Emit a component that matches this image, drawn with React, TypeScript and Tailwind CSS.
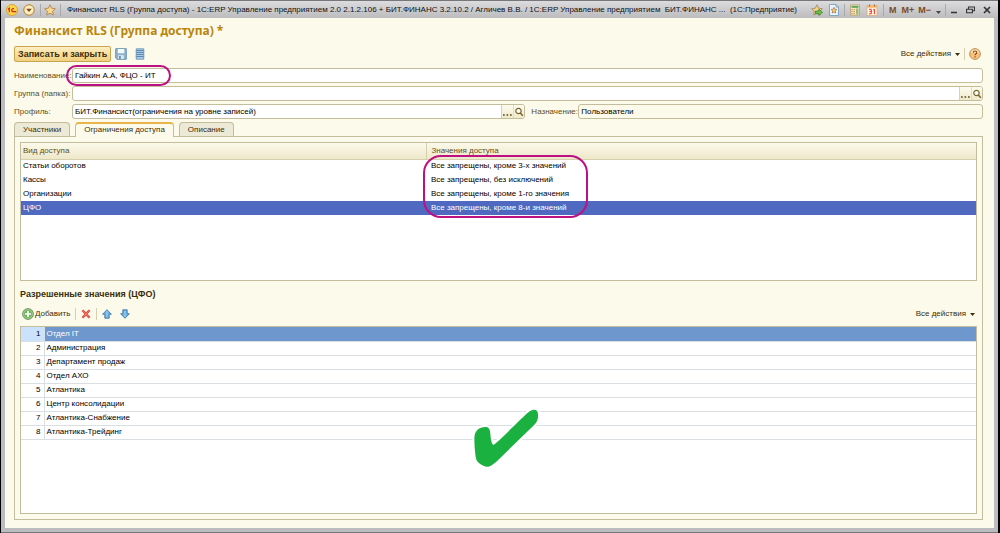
import type { ReactNode } from "react";
import clsx from "clsx";

const accessKinds = [
  { kind: "Статьи оборотов", value: "Все запрещены, кроме 3-х значений" },
  { kind: "Кассы", value: "Все запрещены, без исключений" },
  { kind: "Организации", value: "Все запрещены, кроме 1-го значения" },
  { kind: "ЦФО", value: "Все запрещены, кроме 8-и значений", selected: true },
];

const allowedValues = [
  "Отдел IT",
  "Администрация",
  "Департамент продаж",
  "Отдел АХО",
  "Атлантика",
  "Центр консолидации",
  "Атлантика-Снабжение",
  "Атлантика-Трейдинг",
];

const STAR = "M6 .8l1.6 3.4 3.7.5-2.7 2.6.7 3.7L6 9.200l-3.300 1.800.7-3.700L.7 4.700l3.700-.5z";

const LogoIcon = () => (
  <svg viewBox="0 0 12 12" className="size-3">
    <circle cx="6" cy="6" r="5.500" fill="#fbd64b" stroke="#dca63a" />
    <path d="M2 5.200l1.300-1v4M8 4.900a1.500 1.500 0 1 0-.8 2.800h3" fill="none" stroke="#d8231c" strokeWidth="1.200" />
  </svg>
);

const MenuIcon = () => (
  <svg viewBox="0 0 12 12" className="size-3">
    <circle cx="6" cy="6" r="5.300" fill="#f9d995" stroke="#b98a4b" />
    <circle cx="6" cy="6" r="4" fill="#fdeec5" />
    <path d="M3.200 4.800h5.600L6 8z" fill="#7a4a1c" />
  </svg>
);

const StarIcon = () => (
  <svg viewBox="0 0 12 12" className="size-3">
    <path d={STAR} fill="#fbd98a" stroke="#a87c46" strokeWidth=".8" />
  </svg>
);

const StarAddIcon = () => (
  <svg viewBox="0 0 12 12" className="size-3">
    <path d={STAR} fill="#f8d48d" stroke="#a08558" strokeWidth=".8" />
    <path d="M4.500 7h3.300V5.200L11.600 8.300 7.800 11.400V9.700H4.500z" fill="#6cc04a" stroke="#2f7d27" strokeWidth=".7" />
  </svg>
);

const StarPageIcon = () => (
  <svg viewBox="0 0 12 12" className="size-3">
    <path d="M1.500.5h6.500l2.500 2.500v8.500h-9z" fill="#e9f3fb" stroke="#6f95b8" strokeWidth=".8" />
    <path d="M8 .5v2.500h2.500" fill="none" stroke="#6f95b8" strokeWidth=".8" />
    <path d="M6 3.300l.9 1.900 2 .3-1.500 1.400.4 2.100L6 8l-1.800 1 .4-2.100-1.500-1.400 2-.3z" fill="#fbc66a" stroke="#8f6a35" strokeWidth=".6" />
  </svg>
);

const CalculatorIcon = () => (
  <svg viewBox="0 0 12 12" className="size-3">
    <path d="M1.500.8h9v10.400h-9z" fill="#f8e7c5" stroke="#b59a6a" strokeWidth=".7" />
    <path d="M2.500 1.800h7v2h-7z" fill="#57a65a" />
    <path d="M3 5v5.500M5.200 5v5.500" stroke="#c58b4c" strokeWidth="1.200" strokeDasharray="1.200 .8" />
    <path d="M7 4.500h2.500v6H7z" fill="#9bbd78" />
  </svg>
);

const CalendarIcon = () => (
  <svg viewBox="0 0 12 12" className="size-3">
    <path d="M1 1.500h10v10H1z" fill="#fff1df" stroke="#d9a877" strokeWidth=".7" />
    <path d="M1 1.500h10v2.200H1z" fill="#f6b36b" />
    <path d="M3.500.5v2M8.500.5v2" stroke="#9b6a3d" />
    <path d="M3 5.300h2.300v4.500H3M3.500 7.500h1.800M7.200 6l1.200-.8v5" fill="none" stroke="#e5392b" strokeWidth="1" />
  </svg>
);

const SaveIcon = () => (
  <svg viewBox="0 0 12 12" className="size-3">
    <path d="M.7.7h10.600v10.600H2L.7 10z" fill="#8fb3cf" stroke="#6d95b1" />
    <path d="M2.800 1h6.500v4.200H2.800z" fill="#f4f9fc" />
    <path d="M3.200 7.200h5.600V11H3.200z" fill="#dce8f0" />
    <path d="M4.200 8h1.500v3H4.200z" fill="#54809f" />
  </svg>
);

const ListIcon = () => (
  <svg viewBox="0 0 12 12" className="size-3">
    <path d="M2.200.8h7.600v10.400H2.200z" fill="#a9cbe8" stroke="#5f8cb4" strokeWidth=".8" />
    <path d="M2.500 2.500h7M2.500 4.500h7M2.500 6.500h7M2.500 8.500h7" stroke="#4674a0" strokeWidth=".8" />
  </svg>
);

const SearchIcon = () => (
  <svg viewBox="0 0 10 10" className="size-[10px]">
    <circle cx="4.500" cy="4" r="2.700" fill="#fffef5" stroke="#776531" strokeWidth="1.200" />
    <path d="M6.300 6l2.500 2.700" stroke="#776531" strokeWidth="1.600" />
  </svg>
);

const HelpIcon = () => (
  <svg viewBox="0 0 12 12" className="size-3">
    <circle cx="6" cy="6" r="5.400" fill="#f9c079" stroke="#b98a55" strokeWidth=".9" />
    <path d="M1.800 5a4.300 4.300 0 0 1 8.400 0z" fill="#fde3bb" />
    <path d="M4.300 4.700c0-2.300 3.500-2.200 3.500-.2 0 1.300-1.700 1.300-1.700 2.700M6.100 8.300v1.200" fill="none" stroke="#8a4a1d" strokeWidth="1.200" />
  </svg>
);

const AddIcon = () => (
  <svg viewBox="0 0 12 12" className="size-3">
    <circle cx="6" cy="6" r="5.400" fill="#6fb45a" stroke="#6e8a62" strokeWidth=".9" />
    <circle cx="6" cy="6" r="4.400" fill="none" stroke="#b9dca9" strokeWidth=".7" />
    <path d="M6 3v6M3 6h6" stroke="#fff" strokeWidth="1.700" />
  </svg>
);

const DeleteIcon = () => (
  <svg viewBox="0 0 10 10" className="size-[10px]">
    <path d="M1.500 1.200l7 7.600M8.500 1.200l-7 7.600" stroke="#d9483b" strokeWidth="2.400" />
    <path d="M1.800 1.500l6.400 7M8.200 1.500l-6.400 7" stroke="#f2887c" strokeWidth=".8" />
  </svg>
);

const ArrowIcon = ({ down }: { down?: boolean }) => (
  <svg viewBox="0 0 10 10" className={clsx("size-[10px]", down && "rotate-180")}>
    <path d="M5 .7L9.400 5.300H7.200v3.900H2.800V5.300H.6z" fill="#68b1e2" stroke="#3c6f9c" strokeWidth=".8" strokeLinejoin="round" />
    <path d="M5 2v6" stroke="#a7d6f4" />
  </svg>
);

const Caret = ({ className }: { className?: string }) => (
  <svg viewBox="0 0 5 3" className={clsx("h-[3px] w-[5px]", className)}>
    <path d="M0 0h5L2.500 3z" fill="currentColor" />
  </svg>
);

const Separator = ({ className }: { className?: string }) => (
  <span className={clsx("w-px shrink-0", className)} />
);

const TitleBar = () => (
  <header className="flex h-[17px] shrink-0 items-center bg-linear-to-b from-[#dcdcde] to-[#bcbcbf] pl-[5px] pr-[7px] text-[#111]">
    <button aria-label="Главное меню"><LogoIcon /></button>
    <button aria-label="Меню" className="ml-[5px]"><MenuIcon /></button>
    <Separator className="ml-[5px] h-3 bg-[#a9a9ac]" />
    <button aria-label="Избранное" className="ml-[3px]"><StarIcon /></button>
    <Separator className="ml-1 h-3 bg-[#a9a9ac]" />
    <h1 className="ml-[6px] min-w-0 flex-1 truncate whitespace-pre">
      Финансист RLS (Группа доступа) - 1С:ERP Управление предприятием 2.0 2.1.2.106 + БИТ.ФИНАНС 3.2.10.2 / Агличев В.В. / 1С:ERP Управление предприятием  БИТ.ФИНАНС ...  (1С:Предприятие)
    </h1>
    <div className="flex shrink-0 items-center text-[9px] font-bold text-[#7b4a26]">
      <button aria-label="Добавить в избранное"><StarAddIcon /></button>
      <button aria-label="Открыть избранное" className="ml-[5px]"><StarPageIcon /></button>
      <Separator className="ml-1 h-3 bg-[#a9a9ac]" />
      <button aria-label="Калькулятор" className="ml-1"><CalculatorIcon /></button>
      <button aria-label="Календарь" className="ml-[5px]"><CalendarIcon /></button>
      <Separator className="ml-[5px] h-3 bg-[#a9a9ac]" />
      <button className="ml-[5px]">M</button>
      <button className="ml-[5px]">M+</button>
      <button className="ml-1">M−</button>
      <button aria-label="Ещё" className="ml-[5px] pt-[5px] text-[#444]"><Caret /></button>
      <Separator className="ml-1 h-3 bg-[#a9a9ac]" />
    </div>
    <div className="ml-1 flex items-center gap-2 text-[#333]">
      <button aria-label="Свернуть">
        <svg viewBox="0 0 8 8" className="size-2"><path d="M1 6.500h6" stroke="currentColor" strokeWidth="1.500" /></svg>
      </button>
      <button aria-label="Восстановить">
        <svg viewBox="0 0 9 8" className="h-2 w-[9px]"><path d="M.6 3.200h5.800v3.600H.6zM2.500 3V1h6v3.800H6.600" fill="none" stroke="currentColor" strokeWidth="1.100" /></svg>
      </button>
      <button aria-label="Закрыть">
        <svg viewBox="0 0 8 8" className="size-2"><path d="M1 1l6 6M7 1L1 7" stroke="currentColor" strokeWidth="1.700" /></svg>
      </button>
    </div>
  </header>
);

const PickerButtons = () => (
  <div className="flex shrink-0 border-l border-[#d8d2b4] bg-linear-to-b from-[#fdfbee] to-[#efe9cb]">
    <button aria-label="Выбрать" className="flex w-[11px] items-end justify-center pb-[2px]">
      <svg viewBox="0 0 9 2" className="h-[2px] w-[9px]">
        <path d="M0 .2h1.700v1.600H0zM3.500.2h1.700v1.600H3.500zM7 .2h1.700v1.600H7z" fill="#5e4c1d" />
      </svg>
    </button>
    <button aria-label="Открыть" className="flex w-[11px] items-center justify-center border-l border-[#e3ddc0]">
      <SearchIcon />
    </button>
  </div>
);

type FieldProps = {
  id: string;
  value: string;
  readOnly?: boolean;
  picker?: boolean;
  className?: string;
};

const Field = ({ id, value, readOnly, picker, className }: FieldProps) => (
  <div
    className={clsx(
      "flex h-[15px] min-w-0 overflow-hidden rounded-[3px] border border-[#c3bd9b]",
      readOnly ? "bg-[#fcfaeb]" : "bg-white",
      className,
    )}
  >
    <input
      id={id}
      defaultValue={value}
      readOnly={readOnly}
      className="min-w-0 flex-1 bg-transparent px-[2px] text-black outline-none"
    />
    {picker && <PickerButtons />}
  </div>
);

const AllActions = () => (
  <button className="flex items-center gap-1 text-[#3d2e08]">
    Все действия
    <Caret />
  </button>
);

const Tab = ({ active, children }: { active?: boolean; children: ReactNode }) => (
  <button
    role="tab"
    aria-selected={!!active}
    className={clsx(
      "rounded-t-[4px] border border-b-0 border-[#c3bd9b] px-2 text-[#3d2e08]",
      active ? "relative -mb-px h-[15px] border-t-2 border-t-[#e9b44c] bg-[#fcfaeb] pb-px" : "h-[14px] bg-[#ece9d6]",
    )}
  >
    {children}
  </button>
);

const AccessTable = () => (
  <div className="relative min-h-[139px] border border-[#c3bd9b] bg-white">
    <table className="w-full table-fixed border-collapse text-left">
      <colgroup>
        <col className="w-[42.500%]" />
        <col />
      </colgroup>
      <thead>
        <tr className="h-4 bg-linear-to-b from-[#fbf9ea] to-[#eee8ca] text-[#5f4e1a]">
          <th className="border-b border-r border-[#d5cfae] px-[2px] py-0 font-normal">Вид доступа</th>
          <th className="border-b border-[#d5cfae] px-1 py-0 font-normal">Значения доступа</th>
        </tr>
      </thead>
      <tbody>
        {accessKinds.map(({ kind, value, selected }) => (
          <tr key={kind} className={clsx("h-[14px]", selected ? "bg-[#4f69c0] text-white" : "text-black")}>
            <td className="px-[2px] py-0">{kind}</td>
            <td className="px-1 py-0">{value}</td>
          </tr>
        ))}
      </tbody>
    </table>
    <div className="pointer-events-none absolute left-[42.100%] top-[12px] h-[63px] w-[165px] rounded-[18px] border-2 border-[#bd1183]" />
  </div>
);

const CheckMark = () => (
  <svg viewBox="90 45 215 200" className="pointer-events-none absolute left-[47%] top-[78px] h-[67px] w-[72px]">
    <path
      d="M103 145C103 122 118 111 136 111C147 111 150 119 151 133C152 149 155 163 160 164C168 162 250 78 268 64C281 55 293 59 293 72C294 86 291 96 280 106L171 212C151 230 142 232 130 226C109 216 108 209 106 192C104 177 103 160 103 145Z"
      fill="#1bb140"
      stroke="#fff"
      strokeWidth="12"
      paintOrder="stroke"
    />
  </svg>
);

const ValuesTable = () => (
  <div className="relative flex-1 border border-[#c3bd9b] bg-white">
    <table className="w-full border-collapse text-left text-black">
      <tbody>
        {allowedValues.map((name, i) => (
          <tr key={name} className={clsx("h-[14px] border-b border-[#d9dfe3]", i === 0 && "bg-[#6e97cd] text-white")}>
            <td
              className={clsx(
                "w-[23px] border-r border-[#d9dfe3] px-[3px] py-0 text-right text-black",
                i === 0 && "bg-[#cbe2fd]",
              )}
            >
              {i + 1}
            </td>
            <td className="px-[2px] py-0">{name}</td>
          </tr>
        ))}
      </tbody>
    </table>
    <CheckMark />
  </div>
);

export default function App() {
  return (
    <div className="flex min-h-screen flex-col border-l border-r-2 border-black bg-[#77777a] pb-px pt-px font-['Liberation_Sans',Arial,sans-serif] text-[8px] leading-[12px]">
      <div className="flex flex-1 flex-col rounded-t-[4px] border-x-4 border-b-4 border-[#bcbcc0] bg-[#bcbcc0]">
        <div className="-mx-1">
          <TitleBar />
        </div>
        <main className="flex flex-1 flex-col bg-[#fcfaeb] pb-2 pl-[9px] pr-[11px] pt-[5px]">
          <h2 className="font-['Noto_Sans',Verdana,sans-serif] text-[12px] font-bold leading-4 text-[#b8860b]">
            Финансист RLS (Группа доступа) *
          </h2>

          <div className="mt-[7px] flex h-4 items-center">
            <button className="h-4 rounded-[2px] border border-[#c9a552] bg-linear-to-b from-[#fdeec2] to-[#f1cf7e] px-[3px] text-[9px] font-bold text-[#3d2e08]">
              Записать и закрыть
            </button>
            <button aria-label="Записать" className="ml-1"><SaveIcon /></button>
            <button aria-label="Список" className="ml-[7px]"><ListIcon /></button>
            <div className="ml-auto flex items-center gap-1 pr-[2px]">
              <AllActions />
              <Separator className="h-3 bg-[#d5cfae]" />
              <button aria-label="Справка"><HelpIcon /></button>
            </div>
          </div>

          <form className="mt-[6px] grid grid-cols-[58px_1fr] items-center gap-y-[3px] whitespace-nowrap text-[#5f4e1a]">
            <label htmlFor="name">Наименование:</label>
            <div className="relative">
              <Field id="name" value="Гайкин А.А, ФЦО - ИТ" />
              <div className="pointer-events-none absolute -left-[6px] -top-[3px] h-[21px] w-[105px] rounded-full border-2 border-[#bd1183]" />
            </div>

            <label htmlFor="folder">Группа (папка):</label>
            <Field id="folder" value="" picker />

            <label htmlFor="profile">Профиль:</label>
            <div className="flex items-center">
              <Field id="profile" value="БИТ.Финансист(ограничения на уровне записей)" picker className="flex-[454]" />
              <label htmlFor="purpose" className="ml-[6px] w-[47px]">Назначение:</label>
              <Field id="purpose" value="Пользователи" readOnly className="flex-[405]" />
            </div>
          </form>

          <div role="tablist" className="mt-[3px] flex items-end gap-[5px]">
            <Tab>Участники</Tab>
            <Tab active>Ограничения доступа</Tab>
            <Tab>Описание</Tab>
          </div>

          <section className="flex flex-1 flex-col border border-[#c3bd9b] p-[5px]">
            <AccessTable />
            <h3 className="mt-[5px] text-[9px] font-bold leading-4 text-[#3d2e08]">Разрешенные значения (ЦФО)</h3>
            <div className="flex h-6 items-center pl-[2px]">
              <button className="flex items-center gap-px text-[#3d2e08]">
                <AddIcon />
                Добавить
              </button>
              <Separator className="ml-[5px] h-3 bg-[#d5cfae]" />
              <button aria-label="Удалить" className="ml-[5px]"><DeleteIcon /></button>
              <Separator className="ml-[5px] h-3 bg-[#d5cfae]" />
              <button aria-label="Вверх" className="ml-[5px]"><ArrowIcon /></button>
              <button aria-label="Вниз" className="ml-2"><ArrowIcon down /></button>
              <div className="ml-auto pr-[2px]">
                <AllActions />
              </div>
            </div>
            <ValuesTable />
          </section>
        </main>
      </div>
    </div>
  );
}
